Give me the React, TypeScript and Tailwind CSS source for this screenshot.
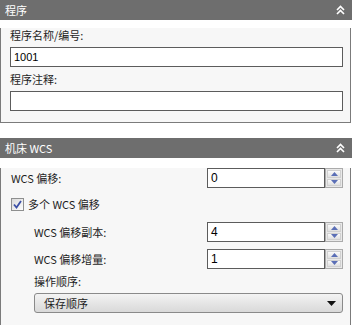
const font = { fontFamily: '"Noto Sans CJK SC", "Liberation Sans", sans-serif' };
const numFont = { fontFamily: '"Liberation Sans", sans-serif' };

function Chevrons() {
  return (
    <svg width="9" height="10" viewBox="0 0 9 10" className="block">
      <path d="M1 5 L4.5 1.5 L8 5" fill="none" stroke="#fff" strokeWidth="1.6" />
      <path d="M1 9 L4.5 5.5 L8 9" fill="none" stroke="#fff" strokeWidth="1.6" />
    </svg>
  );
}

function Header({ title }: { title: string }) {
  return (
    <div className="flex h-[20px] w-[352px] items-center justify-between bg-[#6e6e6e] pl-[5px] pr-[7px] text-[11px] text-white">
      <span className="leading-none">{title}</span>
      <Chevrons />
    </div>
  );
}

function Arrow({ up }: { up?: boolean }) {
  return (
    <svg width="7" height="4" viewBox="0 0 7 4" className="block">
      <path d={up ? 'M0 4 L3.5 0 L7 4 Z' : 'M0 0 L7 0 L3.5 4 Z'} fill="#5b6fb6" />
    </svg>
  );
}

function Spin({ value }: { value: string }) {
  return (
    <div className="flex h-[20px] w-[136px]">
      <div
        className="flex h-full w-[118px] items-center border border-[#5c5c5c] bg-white pl-[3px] text-[12px] text-black"
        style={numFont}
      >
        {value}
      </div>
      <div className="flex h-full w-[18px] flex-col gap-[1px] border border-[#ababab] bg-[#e9e9e9] p-[1px]">
        <div className="flex flex-1 items-center justify-center border border-[#d0d0d0] bg-gradient-to-b from-[#fafafa] to-[#e0e0e0]">
          <Arrow up />
        </div>
        <div className="flex flex-1 items-center justify-center border border-[#d0d0d0] bg-gradient-to-b from-[#fafafa] to-[#e0e0e0]">
          <Arrow />
        </div>
      </div>
    </div>
  );
}

export default function App() {
  return (
    <div className="h-[325px] w-[352px] overflow-hidden bg-white text-[#1e1e1e]" style={font}>
      <Header title="程序" />
      <div className="w-[351px] border-x border-b border-[#7b7b7b] bg-[#f7f7f7] pb-[11px] pl-[9px] pr-[7px] text-[11px]">
        <div className="mt-[8px] h-[15px] leading-[15px]">程序名称/编号:</div>
        <div
          className="mt-[4px] flex h-[20px] items-center border border-[#5c5c5c] bg-white pl-[3px] text-[11px] text-black"
          style={numFont}
        >
          1001
        </div>
        <div className="mt-[5px] h-[15px] leading-[15px]">程序注释:</div>
        <div className="mt-[4px] h-[20px] border border-[#5c5c5c] bg-white" />
      </div>

      <div className="mt-[15px]">
        <Header title="机床 WCS" />
        <div className="h-[167px] w-[351px] border-x border-b border-[#7b7b7b] bg-[#f7f7f7] pl-[10px] pr-[7px] text-[11px]">
          <div className="mt-[10px] flex h-[20px] items-center justify-between">
            <span>WCS 偏移:</span>
            <Spin value="0" />
          </div>
          <div className="mt-[9px] flex h-[14px] items-center gap-[4px]">
            <svg width="13" height="13" viewBox="0 0 13 13" className="block">
              <defs>
                <linearGradient id="cb" x1="0" y1="0" x2="1" y2="1">
                  <stop offset="0" stopColor="#d8d8d8" />
                  <stop offset="1" stopColor="#ffffff" />
                </linearGradient>
              </defs>
              <rect x="0.5" y="0.5" width="12" height="12" fill="url(#cb)" stroke="#8e8f8f" />
              <path d="M3 6.5 L5.5 9.5 L10 3" fill="none" stroke="#3b4fa6" strokeWidth="1.8" />
            </svg>
            <span>多个 WCS 偏移</span>
          </div>
          <div className="pl-[23px]">
            <div className="mt-[11px] flex h-[20px] items-center justify-between">
              <span>WCS 偏移副本:</span>
              <Spin value="4" />
            </div>
            <div className="mt-[7px] flex h-[20px] items-center justify-between">
              <span>WCS 偏移增量:</span>
              <Spin value="1" />
            </div>
            <div className="mt-[5px] h-[15px] leading-[15px]">操作顺序:</div>
            <div className="mt-[4px] flex h-[20px] items-center justify-between rounded-[3px] border border-[#8a8a8a] bg-gradient-to-b from-[#f3f3f3] to-[#d9d9d9] pl-[9px] pr-[6px]">
              <span>保存顺序</span>
              <svg width="9" height="5" viewBox="0 0 9 5" className="block">
                <path d="M0 0 L9 0 L4.5 5 Z" fill="#111" />
              </svg>
            </div>
          </div>
        </div>
      </div>
    </div>
  );
}
